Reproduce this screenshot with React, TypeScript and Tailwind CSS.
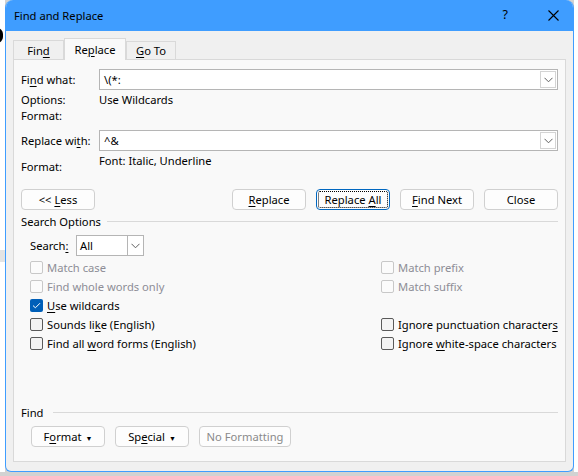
import type { ReactNode } from "react";

function U({ children }: { children: ReactNode }) {
  return <span className="underline underline-offset-2">{children}</span>;
}

function Chevron() {
  return (
    <svg width="9" height="6" viewBox="0 0 9 6" className="text-[#606060]">
      <path d="M0.5 0.8 L4.5 4.8 L8.5 0.8" fill="none" stroke="currentColor" strokeWidth="1" />
    </svg>
  );
}

function Combo({ value }: { value: string }) {
  return (
    <div className="flex h-[21px] flex-1 items-stretch border border-[#b5b5b5] bg-white">
      <div className="flex flex-1 items-center px-[4px] text-black">{value}</div>
      <div className="my-px mr-px flex w-[16px] items-center justify-center border border-[#d4d4d4] bg-white">
        <Chevron />
      </div>
    </div>
  );
}

function Btn({
  children,
  w = "w-[74px]",
  focus,
  disabled,
}: {
  children: ReactNode;
  w?: string;
  focus?: boolean;
  disabled?: boolean;
}) {
  return (
    <div
      className={`flex h-[21px] ${w} items-center justify-center whitespace-pre rounded-[4px] border bg-[#fdfdfd] ${
        focus ? "border-[#0067c0]" : "border-[#d0d0d0]"
      } ${disabled ? "text-[#8a8a8a]" : "text-black"}`}
    >
      {focus ? (
        <span className="flex h-[17px] w-[70px] items-center justify-center rounded-[2px] border border-dotted border-black">
          <span>{children}</span>
        </span>
      ) : (
        <span>{children}</span>
      )}
    </div>
  );
}

function Check({
  label,
  checked,
  disabled,
}: {
  label: ReactNode;
  checked?: boolean;
  disabled?: boolean;
}) {
  return (
    <div className="flex h-[19px] items-center gap-[4px] whitespace-nowrap">
      {checked ? (
        <div className="flex h-[13px] w-[13px] shrink-0 items-center justify-center rounded-[2px] bg-[#005fb8]">
          <svg width="9" height="7" viewBox="0 0 9 7">
            <path d="M1 3.6 L3.4 5.8 L8 1.2" fill="none" stroke="white" strokeWidth="1" />
          </svg>
        </div>
      ) : (
        <div
          className={`h-[13px] w-[13px] shrink-0 rounded-[2px] border ${
            disabled ? "border-[#c8c8c8] bg-[#fbfbfb]" : "border-[#5a5a5a] bg-[#f3f3f3]"
          }`}
        />
      )}
      <span className={disabled ? "text-[#8d8d96]" : "text-black"}>{label}</span>
    </div>
  );
}

export default function App() {
  return (
    <div className="flex h-[476px] w-[578px] items-start overflow-hidden bg-[#d2d2d2] font-['Noto_Sans','Liberation_Sans',sans-serif] text-[11.2px] leading-none">
      {/* document edge on the left */}
      <div className="relative h-[472px] w-[5px] shrink-0 overflow-hidden bg-white">
        <div className="absolute left-[-9px] top-[28px] h-[15px] w-[12px] rounded-full border-[3px] border-black" />
        <div className="absolute left-0 top-[250px] h-[12px] w-[5px] bg-[#e4e4e4]" />
      </div>

      {/* dialog */}
      <div className="flex h-[472px] w-[569px] shrink-0 flex-col overflow-hidden rounded-t-[8px] rounded-b-[6px] border border-t-0 border-[#3f9dff] bg-[#f0f0f0]">
        <div className="flex h-[31px] shrink-0 items-center bg-[#3f9dff] pl-[8px] text-black">
          <span className="text-[11.2px]">Find and Replace</span>
          <span className="ml-auto mr-[40px] text-[12.5px]">?</span>
          <svg width="11" height="11" viewBox="0 0 11 11" className="mr-[14px]">
            <path d="M0.5 0.5 L10.5 10.5 M10.5 0.5 L0.5 10.5" stroke="black" strokeWidth="1.1" />
          </svg>
        </div>

        <div className="flex flex-1 flex-col px-[7px] pb-[9px]">
          {/* tabs */}
          <div className="flex h-[28px] items-end">
            <div className="-mb-px flex h-[20px] w-[51px] items-center justify-center border border-b-0 border-[#d9d9d9] bg-[#f0f0f0]">
              <span>
                Fin<U>d</U>
              </span>
            </div>
            <div className="relative z-10 -mb-px flex h-[22px] w-[62px] items-center justify-center border border-b-0 border-[#d9d9d9] bg-[#f9f9f9]">
              <span>
                Re<U>p</U>lace
              </span>
            </div>
            <div className="-mb-px flex h-[19px] w-[50px] items-center justify-center border border-b-0 border-[#d9d9d9] bg-[#f0f0f0]">
              <span>
                <U>G</U>o To
              </span>
            </div>
          </div>

          {/* panel */}
          <div className="flex flex-1 flex-col border border-[#d9d9d9] bg-[#f9f9f9] px-[7px] pt-[9px]">
            <div className="flex items-center">
              <span className="w-[78px]">
                Fi<U>n</U>d what:
              </span>
              <Combo value={"\\(*:"} />
            </div>
            <div className="mt-[2px] flex h-[16px] items-center">
              <span className="w-[78px]">Options:</span>
              <span>Use Wildcards</span>
            </div>
            <div className="flex h-[16px] items-center">Format:</div>

            <div className="mt-[6px] flex items-center">
              <span className="w-[78px]">
                Replace wi<U>t</U>h:
              </span>
              <Combo value="^&" />
            </div>
            <div className="flex h-[24px]">
              <span className="mt-[10px] w-[78px]">Format:</span>
              <span className="mt-[4px]">Font: Italic, Underline</span>
            </div>

            <div className="mt-[14px] flex items-center">
              <Btn>
                {"<< "}
                <U>L</U>ess
              </Btn>
              <div className="ml-auto flex gap-[10px]">
                <Btn>
                  <U>R</U>eplace
                </Btn>
                <Btn focus>
                  {"Replace "}
                  <U>A</U>ll
                </Btn>
                <Btn>
                  <U>F</U>ind Next
                </Btn>
                <Btn>Close</Btn>
              </div>
            </div>

            <div className="mt-[6px] flex items-center">
              <span>Search Options</span>
              <div className="ml-[6px] h-px flex-1 bg-[#d9d9d9]" />
            </div>

            <div className="mt-[8px] flex items-center pl-[9px]">
              <span className="w-[46px]">
                Search<U>:</U>
              </span>
              <div className="w-[68px]">
                <div className="flex h-[21px] items-stretch border border-[#b5b5b5] bg-white">
                  <div className="flex flex-1 items-center px-[3px]">All</div>
                  <div className="flex w-[16px] items-center justify-center border-l border-[#b5b5b5]">
                    <Chevron />
                  </div>
                </div>
              </div>
            </div>

            <div className="mt-[2px] flex pl-[9px]">
              <div className="flex w-[351px] shrink-0 flex-col">
                <Check label="Match case" disabled />
                <Check label="Find whole words only" disabled />
                <Check
                  checked
                  label={
                    <>
                      <U>U</U>se wildcards
                    </>
                  }
                />
                <Check
                  label={
                    <>
                      Sounds li<U>k</U>e (English)
                    </>
                  }
                />
                <Check
                  label={
                    <>
                      Find all <U>w</U>ord forms (English)
                    </>
                  }
                />
              </div>
              <div className="flex flex-col">
                <Check label="Match prefix" disabled />
                <Check label="Match suffix" disabled />
                <div className="h-[19px]" />
                <Check
                  label={
                    <>
                      Ignore punctuation character<U>s</U>
                    </>
                  }
                />
                <Check
                  label={
                    <>
                      Ignore <U>w</U>hite-space characters
                    </>
                  }
                />
              </div>
            </div>

            <div className="mt-auto flex items-center">
              <span>Find</span>
              <div className="ml-[9px] h-px flex-1 bg-[#d9d9d9]" />
            </div>
            <div className="mb-[14px] mt-[8px] flex gap-[10px] pl-[10px]">
              <Btn>
                F<U>o</U>rmat
                <span className="ml-[4px] text-[7px]">▼</span>
              </Btn>
              <Btn>
                Sp<U>e</U>cial
                <span className="ml-[4px] text-[7px]">▼</span>
              </Btn>
              <Btn w="w-[92px]" disabled>
                No Formatting
              </Btn>
            </div>
          </div>
        </div>
      </div>

      {/* document edge on the right */}
      <div className="h-[472px] w-[4px] shrink-0 bg-white" />
    </div>
  );
}
